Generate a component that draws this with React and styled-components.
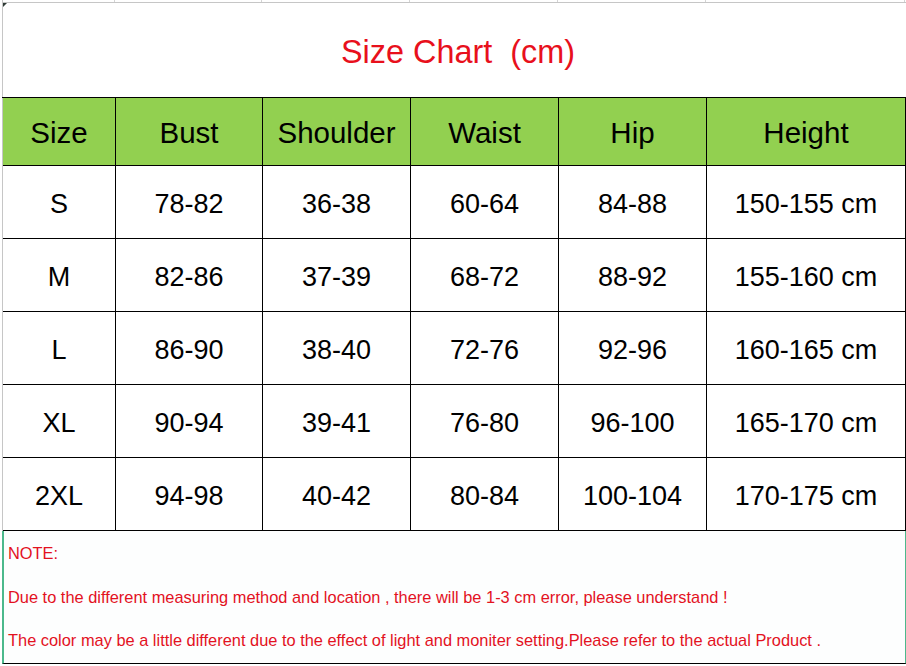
import React from 'react'
import styled, { createGlobalStyle } from 'styled-components'

const GlobalStyle = createGlobalStyle`
	html, body {
		margin: 0;
		padding: 0;
		background: #ffffff;
	}

	body {
		font-family: "Liberation Sans", Arial, sans-serif;
	}
`

const COLUMNS = '113px 147px 148px 148px 148px 199px'

const Sheet = styled('div')`
	width: 904px;
	border-left: 1px solid #c6c6c6;
	margin-left: 2px;
`

const GridLines = styled('div')`
	display: grid;
	grid-template-columns: ${COLUMNS};
	height: 2px;
	margin-left: -1px;
	border-bottom: 1px solid #c6c6c6;

	& > span {
		border-right: 1px solid #d4d4d4;
	}
`

const Title = styled('div')`
	position: relative;
	height: 94px;
	display: flex;
	align-items: center;
	justify-content: center;
	color: #e8101c;
	font-size: 32.4px;
	white-space: pre;
	padding: 4px 0 0 6px;
	box-sizing: border-box;

	&::before {
		content: '';
		position: absolute;
		left: 0;
		top: 0;
		border-top: 4px solid #2f3b36;
		border-right: 4px solid transparent;
	}
`

const Table = styled('div')`
	display: grid;
	grid-template-columns: ${COLUMNS};
	border-top: 1px solid #000;
	margin-left: -1px;
	padding-left: 1px;
	width: 903px;
`

const Cell = styled('div')`
	display: flex;
	align-items: center;
	justify-content: center;
	height: ${p => (p.$head ? 68 : 73)}px;
	box-sizing: border-box;
	border-right: 1px solid #000;
	border-bottom: 1px solid #000;
	background: ${p => (p.$head ? '#92d050' : '#ffffff')};
	color: #000;
	font-size: ${p => (p.$head ? 29.5 : 27)}px;
	padding-top: ${p => (p.$head ? 3 : 4)}px;
`

const Note = styled('div')`
	height: 133px;
	box-sizing: border-box;
	margin-left: -1px;
	border-left: 2px solid #4cb98c;
	border-right: 2px solid #4cb98c;
	border-bottom: 1px solid #000;
	padding: 1px 0 0 4px;
	width: 905px;
	color: #e3121f;
	font-size: 16.4px;
	line-height: 43.5px;
	background: #fdfefe;
`

const NoteLine = styled('div')`
	white-space: nowrap;
`

const HEADERS = ['Size', 'Bust', 'Shoulder', 'Waist', 'Hip', 'Height']

const ROWS = [
	['S', '78-82', '36-38', '60-64', '84-88', '150-155 cm'],
	['M', '82-86', '37-39', '68-72', '88-92', '155-160 cm'],
	['L', '86-90', '38-40', '72-76', '92-96', '160-165 cm'],
	['XL', '90-94', '39-41', '76-80', '96-100', '165-170 cm'],
	['2XL', '94-98', '40-42', '80-84', '100-104', '170-175 cm']
]

export default function App() {
	return (
		<>
			<GlobalStyle />
			<Sheet>
				<GridLines>
					{HEADERS.map(h => <span key={h} />)}
				</GridLines>

				<Title>{'Size Chart  (cm)'}</Title>

				<Table>
					{HEADERS.map(h => (
						<Cell key={h} $head>{h}</Cell>
					))}
					{ROWS.map(row =>
						row.map((value, i) => (
							<Cell key={row[0] + i}>{value}</Cell>
						))
					)}
				</Table>

				<Note>
					<NoteLine>NOTE:</NoteLine>
					<NoteLine>
						Due to the different measuring method and location , there will be 1-3 cm error, please understand !
					</NoteLine>
					<NoteLine>
						The color may be a little different due to the effect of light and moniter setting.Please refer to the actual Product .
					</NoteLine>
				</Note>
			</Sheet>
		</>
	)
}
